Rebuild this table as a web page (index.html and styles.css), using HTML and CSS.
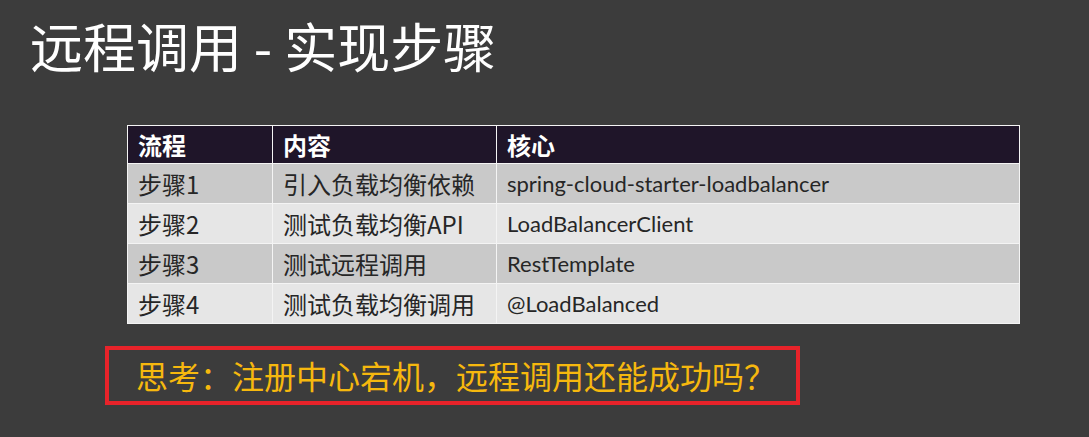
FILE: index.html
```html
<!DOCTYPE html>
<html lang="zh-CN">
<head>
<meta charset="utf-8">
<link rel="stylesheet" href="styles.css">
</head>
<body>
<div class="slide">
  <h1 class="title">远程调用 - 实现步骤</h1>
  <table class="steps">
    <colgroup>
      <col class="c1"><col class="c2"><col class="c3">
    </colgroup>
    <thead>
      <tr><th>流程</th><th>内容</th><th>核心</th></tr>
    </thead>
    <tbody>
      <tr class="odd"><td>步骤1</td><td>引入负载均衡依赖</td><td class="code">spring-cloud-starter-loadbalancer</td></tr>
      <tr class="even"><td>步骤2</td><td>测试负载均衡API</td><td class="code">LoadBalancerClient</td></tr>
      <tr class="odd"><td>步骤3</td><td>测试远程调用</td><td class="code">RestTemplate</td></tr>
      <tr class="even"><td>步骤4</td><td>测试负载均衡调用</td><td class="code">@LoadBalanced</td></tr>
    </tbody>
  </table>
  <div class="think">思考：注册中心宕机，远程调用还能成功吗？</div>
</div>
</body>
</html>
```
FILE: styles.css
```css
html, body {
  margin: 0;
  padding: 0;
  background: #3c3c3c;
}
.slide {
  width: 1089px;
  height: 437px;
  display: flex;
  flex-direction: column;
  align-items: flex-start;
  font-family: "Noto Sans CJK SC", "Noto Sans", sans-serif;
}
.title {
  margin: 13px 0 0 30px;
  font-size: 53px;
  font-weight: 400;
  line-height: 64px;
  color: #ffffff;
}
.steps {
  margin: 48px 0 0 127px;
  width: 892px;
  border-collapse: collapse;
  table-layout: fixed;
  color: #262626;
  font-size: 24px;
}
.c1 { width: 145px; }
.c2 { width: 224px; }
.c3 { width: 523px; }
.steps th, .steps td {
  border: 1px solid #f4f4f4;
  text-align: left;
  padding: 0 0 0 10px;
  white-space: nowrap;
  line-height: 30px;
}
.steps th {
  background: #1f1529;
  color: #ffffff;
  font-weight: 700;
  height: 37px;
}
.steps td {
  height: 39px;
}
.steps .odd td { background: #c9c9c9; }
.steps .even td { background: #e6e6e6; }
.steps td.code {
  font-family: "Lato", "Open Sans", sans-serif;
  font-size: 22px;
}
.think {
  margin: 22px 0 0 105px;
  width: 660px;
  height: 51px;
  border: 4px solid #e8232a;
  color: #f6b80e;
  font-size: 32px;
  line-height: 51px;
  padding-left: 27px;
  box-sizing: content-box;
  white-space: nowrap;
}
```
